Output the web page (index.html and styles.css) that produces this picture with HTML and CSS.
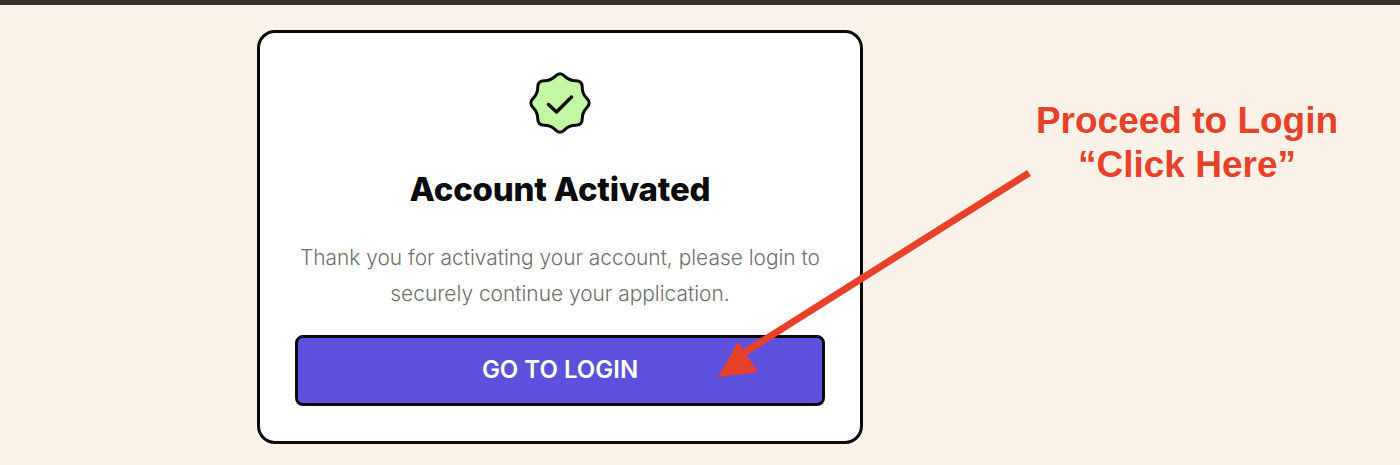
FILE: index.html
```html
<!DOCTYPE html>
<html lang="en">
<head>
    <meta charset="UTF-8">
    <meta name="viewport" content="width=device-width, initial-scale=1.0">
    <title>Account Activated</title>
    <link rel="stylesheet" href="styles.css">
</head>
<body>
    <div class="top-bar"></div>

    <div class="page">
        <!-- Activation card -->
        <div class="card">
            <svg class="badge" viewBox="0 0 64 64" width="64" height="64" aria-hidden="true">
                <path class="badge-shape" d="M36.6 5.15Q41.2 9.8 47.75 9.75Q54.3 9.7 54.25 16.25Q54.2 22.8 58.85 27.4Q63.5 32 58.85 36.6Q54.2 41.2 54.25 47.75Q54.3 54.3 47.75 54.25Q41.2 54.2 36.6 58.85Q32 63.5 27.4 58.85Q22.8 54.2 16.25 54.25Q9.7 54.3 9.75 47.75Q9.8 41.2 5.15 36.6Q0.5 32 5.15 27.4Q9.8 22.8 9.75 16.25Q9.7 9.7 16.25 9.75Q22.8 9.8 27.4 5.15Q32 0.5 36.6 5.15Z"/>
                <path class="badge-check" d="M20.5 33.5L28.5 41L43.5 26"/>
            </svg>
            <h1 class="card-title">Account Activated</h1>
            <p class="card-text">Thank you for activating your account, please login to<br>securely continue your application.</p>
            <button class="button-primary">GO TO LOGIN</button>
        </div>
    </div>

    <!-- Annotation drawn over the screenshot -->
    <div class="callout">Proceed to Login<br>“Click Here”</div>
    <svg class="arrow" viewBox="0 0 1400 465" width="1400" height="465" aria-hidden="true">
        <line x1="1029" y1="173" x2="745" y2="352" stroke="#e8412a" stroke-width="7"/>
        <polygon points="718,377 738,342 758,372" fill="#e8412a"/>
    </svg>
</body>
</html>
```

FILE: styles.css
```css
/* General Styles */
* {
    box-sizing: border-box;
}

html, body {
    height: 100%;
    margin: 0;
    font-family: Inter, Arial, sans-serif;
    background-color: #faf1e8;
    overflow: hidden;
}

.top-bar {
    height: 5px;
    background-color: #35322e;
}

/* Page */
.page {
    padding: 25px 0 0 257px;
}

/* Card */
.card {
    width: 606px;
    height: 414px;
    padding: 38px 36px 0;
    display: flex;
    flex-direction: column;
    align-items: center;
    background: #fff;
    border: 3px solid #0b0b0b;
    border-radius: 18px;
}

.badge-shape {
    fill: #c3f7a4;
    stroke: #0b0b0b;
    stroke-width: 3;
    stroke-linejoin: round;
}

.badge-check {
    fill: none;
    stroke: #0b0b0b;
    stroke-width: 3.5;
    stroke-linecap: round;
    stroke-linejoin: round;
}

.card-title {
    margin: 34px 0 0;
    font-size: 33px;
    line-height: 40px;
    font-weight: 800;
    color: #0b0b0b;
    letter-spacing: -0.2px;
}

.card-text {
    margin: 31px 0 0;
    font-size: 20.9px;
    line-height: 36px;
    font-weight: 300;
    color: #6f6f6f;
    text-align: center;
    white-space: nowrap;
}

/* Buttons */
.button-primary {
    width: 530px;
    height: 71px;
    margin-top: 23px;
    padding-bottom: 3px;
    flex-shrink: 0;
    background-color: #5d50dc;
    color: white;
    font-family: inherit;
    font-size: 24px;
    font-weight: 600;
    border: 3px solid #0b0b0b;
    border-radius: 8px;
    cursor: pointer;
}

/* Annotation */
.callout {
    position: absolute;
    left: 1000px;
    top: 99px;
    width: 374px;
    font-family: "Liberation Sans", Arial, sans-serif;
    font-size: 37px;
    line-height: 44px;
    font-weight: 700;
    color: #e8412a;
    text-align: center;
}

.arrow {
    position: absolute;
    left: 0;
    top: 0;
}
```
